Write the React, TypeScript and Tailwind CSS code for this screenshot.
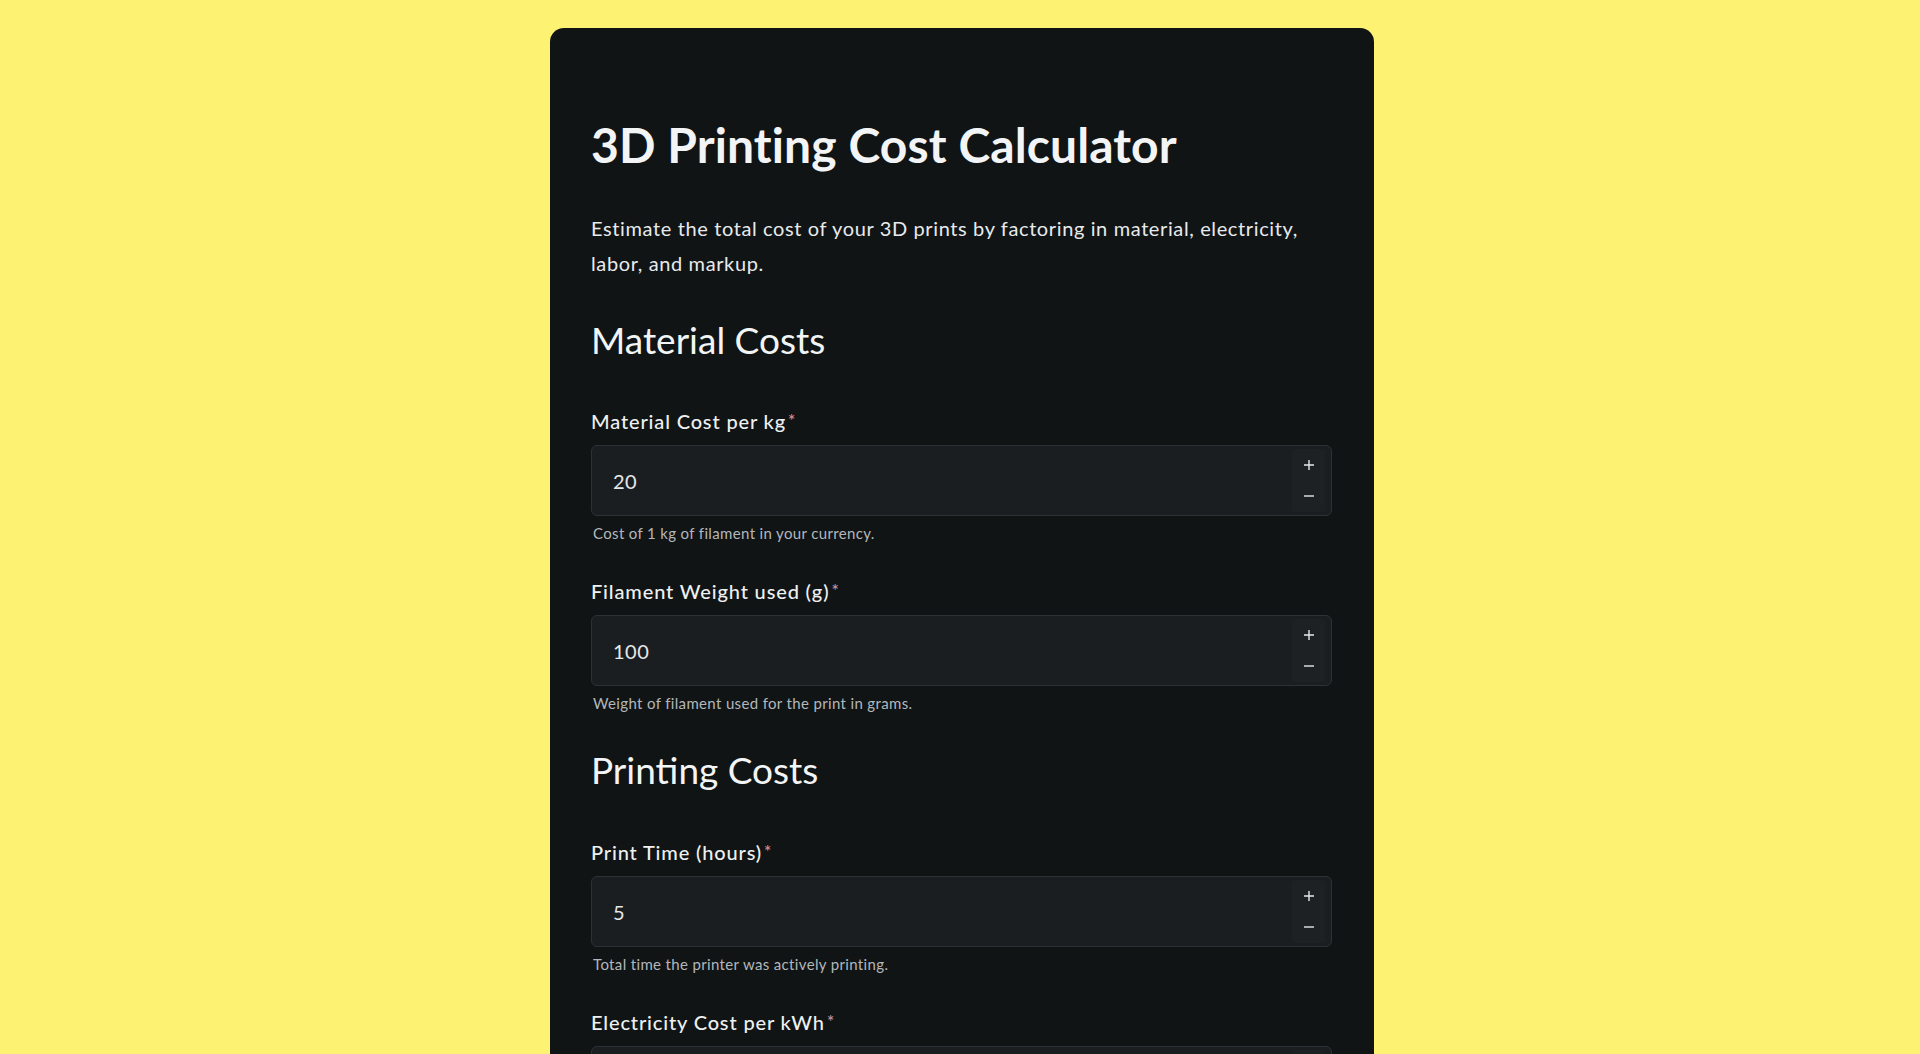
import React from "react";

const font = { fontFamily: '"Lato", "Noto Sans", sans-serif' };

function Plus() {
  return (
    <svg width="12" height="12" viewBox="0 0 12 12" fill="none">
      <path d="M6 1v10M1 6h10" stroke="#e5e7eb" strokeWidth="1.4" />
    </svg>
  );
}
function Minus() {
  return (
    <svg width="12" height="12" viewBox="0 0 12 12" fill="none">
      <path d="M1 6h10" stroke="#e5e7eb" strokeWidth="1.4" />
    </svg>
  );
}

function Field({ label, value, help }: { label: string; value: string; help: string }) {
  return (
    <div className="flex flex-col">
      <label className="text-[20px] leading-[28px] font-medium text-[#eef0f1] tracking-[0.85px] mb-[10px]">
        {label}
        <span className="text-[#d4919a] text-[17px] align-top ml-[2px]">*</span>
      </label>
      <div className="h-[71px] rounded-[6px] border border-[#2d3135] bg-[#1b1e21] flex items-center pl-[21px] pr-[6px]">
        <span className="flex-1 text-[20px] tracking-[0.5px] text-[#e6e8ea]">{value}</span>
        <div className="flex flex-col w-[33px] h-[63px]">
          <div className="flex-1 flex items-center justify-center bg-[#1e2124] rounded-t-[4px]">
            <Plus />
          </div>
          <div className="flex-1 flex items-center justify-center bg-[#1e2124] rounded-b-[4px]">
            <Minus />
          </div>
        </div>
      </div>
      <p className="mt-[7px] ml-[2px] text-[15px] leading-[20px] tracking-[0.35px] text-[#b3b7bb]">{help}</p>
    </div>
  );
}

export default function App() {
  return (
    <div className="min-h-screen bg-[#fef272] pt-[28px] pb-10 pl-[4px]" style={font}>
      <div className="w-[824px] mx-auto bg-[#101415] rounded-[14px] pt-[89px] pb-16 pl-[41px] pr-[42px]">
        <h1 className="text-[48px] leading-[56px] font-bold text-[#f3f4f5] tracking-[0.1px]">
          3D Printing Cost Calculator
        </h1>
        <p className="mt-[38px] text-[20px] leading-[35px] tracking-[0.62px] text-[#e8eaec]">
          Estimate the total cost of your 3D prints by factoring in material, electricity, labor, and markup.
        </p>

        <h2 className="mt-[37px] text-[37px] leading-[44px] font-normal text-[#f3f4f5]">
          Material Costs
        </h2>
        <div className="mt-[45px] flex flex-col gap-[34px]">
          <Field label="Material Cost per kg" value="20" help="Cost of 1 kg of filament in your currency." />
          <Field label="Filament Weight used (g)" value="100" help="Weight of filament used for the print in grams." />
        </div>

        <h2 className="mt-[35px] text-[37px] leading-[44px] font-normal text-[#f3f4f5]">
          Printing Costs
        </h2>
        <div className="mt-[46px] flex flex-col gap-[34px]">
          <Field label="Print Time (hours)" value="5" help="Total time the printer was actively printing." />
          <Field label="Electricity Cost per kWh" value="0.15" help="Your electricity rate per kilowatt-hour." />
          <Field label="Printer Power Consumption (W)" value="200" help="Average power draw of your printer in watts." />
        </div>
      </div>
    </div>
  );
}
